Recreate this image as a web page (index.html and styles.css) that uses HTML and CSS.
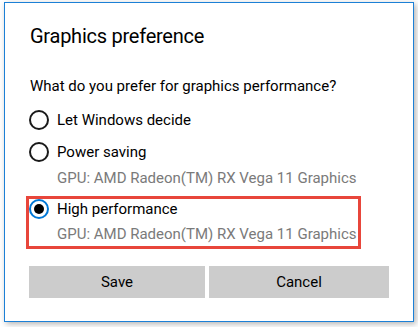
FILE: index.html
```html
<!DOCTYPE html>
<html>
<head>
<meta charset="utf-8">
<link rel="stylesheet" href="styles.css">
</head>
<body>
<div class="dialog">
  <div class="title">Graphics preference</div>
  <div class="question">What do you prefer for graphics performance?</div>
  <div class="option opt1"><span class="radio"></span><span class="label">Let Windows decide</span></div>
  <div class="option opt2"><span class="radio"></span><span class="label">Power saving</span></div>
  <div class="sub sub1">GPU: AMD Radeon(TM) RX Vega 11 Graphics</div>
  <div class="highlight">
    <div class="option opt3"><span class="radio checked"></span><span class="label">High performance</span></div>
    <div class="sub sub2">GPU: AMD Radeon(TM) RX Vega 11 Graphics</div>
  </div>
  <div class="buttons">
    <div class="btn">Save</div>
    <div class="btn">Cancel</div>
  </div>
</div>
</body>
</html>
```
FILE: styles.css
```css
html, body {
  margin: 0;
  padding: 0;
  background: #ffffff;
}
body {
  font-family: "Roboto", "Noto Sans", sans-serif;
  color: #000;
  width: 418px;
  height: 327px;
  overflow: hidden;
}
.dialog {
  box-sizing: border-box;
  margin: 2px 0 0 4px;
  width: 410px;
  height: 320px;
  border: 1px solid #1c80d6;
  background: #fff;
  padding: 19px 0 0 24px;
  box-shadow: 2px 2px 6px rgba(0,0,0,0.3);
  white-space: nowrap;
}
.title {
  font-size: 20px;
  line-height: 28px;
  padding-left: 1px;
  letter-spacing: -0.25px;
}
.question {
  margin-top: 26px;
  font-size: 15px;
  line-height: 20px;
  padding-left: 1px;
}
.option {
  display: flex;
  align-items: center;
  gap: 8px;
  height: 20px;
  font-size: 15px;
  line-height: 20px;
}
.opt1 { margin-top: 14px; }
.opt2 { margin-top: 11.5px; }
.radio {
  box-sizing: border-box;
  width: 20px;
  height: 20px;
  border: 2px solid #1a1a1a;
  border-radius: 50%;
  display: flex;
  align-items: center;
  justify-content: center;
  flex: none;
}
.radio.checked {
  border-color: #0078d7;
}
.radio.checked::after {
  content: "";
  width: 10px;
  height: 10px;
  border-radius: 50%;
  background: #000;
}
.sub {
  font-size: 15px;
  line-height: 20px;
  color: #7a7a7a;
  padding-left: 28px;
}
.sub1 { margin-top: 6.5px; }
.highlight {
  box-sizing: border-box;
  margin: 7.8px 0 0 -3px;
  width: 335px;
  border: 3px solid #e8463b;
  padding: 0 0 2px 0;
}
.sub2 { margin-top: 5.7px; }
.buttons {
  display: grid;
  grid-template-columns: 176px 180px;
  gap: 4px;
  margin-top: 17px;
}
.btn {
  height: 32px;
  background: #cccccc;
  font-size: 15px;
  line-height: 32px;
  text-align: center;
}
```
